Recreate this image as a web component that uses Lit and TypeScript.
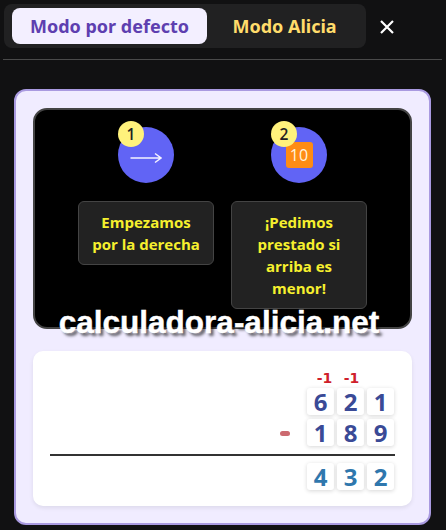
import { LitElement, html, css } from "lit";
import { customElement } from "lit/decorators.js";

@customElement("app-root")
export class AppRoot extends LitElement {
  static styles = css`
    :host { display: block; position: relative; width: 446px; height: 530px; overflow: hidden; background: #111112; font-family: "Open Sans", sans-serif; }
    .top { display: flex; align-items: center; padding: 4px 3px 0 4px; height: 44px; }
    .tabs { display: flex; align-items: center; width: 362px; height: 44px; box-sizing: border-box; padding: 4px 8px; background: #212122; border-radius: 8px; }
    .tab { height: 36px; display: flex; align-items: center; justify-content: center; font: 700 18px "Noto Sans", sans-serif; border-radius: 8px; }
    .tab.on { width: 195px; background: #f3efff; color: #5e3fb0; }
    .tab.off { flex: 1; color: #ffdc6b; padding-left: 4px; }
    .close { margin: 1px 0 0 13px; width: 16px; height: 16px; }
    .rule { height: 1px; background: #4a4a4a; margin: 11px 4px 0 3px; }
    .panel { box-sizing: border-box; width: 417px; height: 436px; margin: 29px 0 0 14px; padding: 17px 17px; background: #f0ecff; border: 2px solid #a99ae0; border-radius: 12px; display: flex; flex-direction: column; gap: 22px; }
    .steps { box-sizing: border-box; height: 221px; background: #000; border: 2px solid #444; border-radius: 14px; display: flex; justify-content: center; gap: 17px; padding-top: 15px; }
    .step { width: 136px; display: flex; flex-direction: column; align-items: center; }
    .circle { position: relative; width: 56px; height: 56px; margin-top: 2px; border-radius: 50%; background: #6164f5; display: flex; align-items: center; justify-content: center; }
    .badge { position: absolute; left: 0; top: -6px; width: 26px; height: 26px; border-radius: 50%; background: #fff27c; color: #222; display: flex; align-items: center; justify-content: center; font: 600 15.5px "Open Sans", sans-serif; }
    .arrow { margin-top: 5px; }
    .ten { width: 27px; height: 26px; border-radius: 3px; background: #ff8c14; color: #fff3dd; display: flex; align-items: center; justify-content: center; font: 400 16px "Open Sans", sans-serif; }
    .label { box-sizing: border-box; width: 136px; margin-top: 18px; padding: 9px 8px; background: #222222; border: 1px solid #444; border-radius: 6px; color: #f6f02e; text-align: center; font: 700 15px/22px "Open Sans", sans-serif; }
    .calc { flex: 1; background: #fff; border-radius: 10px; box-shadow: 0 2px 4px rgba(0,0,0,0.08); padding: 18px 17px 0; display: flex; flex-direction: column; align-items: stretch; }
    .carry { display: grid; grid-template-columns: 27px 27px 30px; justify-content: end; height: 19px; color: #cf1f2c; font: 700 14px/18px "DejaVu Sans", sans-serif; text-align: center; }
    .row { display: flex; justify-content: flex-end; gap: 3px; padding-right: 1px; }
    .row + .row { margin-top: 4px; }
    .minus { width: 10px; height: 5px; border-radius: 2.5px; background: #cc6a70; align-self: center; margin-right: 14px; margin-top: 2px; }
    .cell { width: 27px; height: 27px; border-radius: 3px; background: #fff; box-shadow: 0 1px 4px rgba(0,0,0,0.16); display: flex; align-items: center; justify-content: center; color: #3a4a96; font: 700 24px/1 "Noto Sans", sans-serif; }
    .line { height: 2px; background: #333; margin: 8px 0 7px; }
    .res .cell { color: #2f77ad; }
    .mark { position: absolute; left: 0; width: 100%; top: 304px; padding-right: 8px; box-sizing: border-box; text-align: center; color: #fff; font: 700 31.5px/36px "Liberation Sans", sans-serif; -webkit-text-stroke: 0.4px #fff; text-shadow: 3px 3px 3px rgba(0,0,0,0.6); pointer-events: none; }
  `;

  render() {
    return html`
      <div class="top">
        <div class="tabs">
          <div class="tab on">Modo por defecto</div>
          <div class="tab off">Modo Alicia</div>
        </div>
        <svg class="close" viewBox="0 0 16 16"><path d="M2 2 L14 14 M14 2 L2 14" stroke="#fff" stroke-width="2.2" fill="none"/></svg>
      </div>
      <div class="rule"></div>
      <div class="panel">
        <div class="steps">
          <div class="step">
            <div class="circle">
              <span class="badge">1</span>
              <svg class="arrow" width="32" height="14" viewBox="0 0 32 14"><path d="M0.5 7 H31 M25 2.5 L31 7 L25 11.5" stroke="#f4f2ff" stroke-width="1.5" fill="none"/></svg>
            </div>
            <div class="label">Empezamos por la derecha</div>
          </div>
          <div class="step">
            <div class="circle">
              <span class="badge">2</span>
              <div class="ten">10</div>
            </div>
            <div class="label">¡Pedimos prestado si arriba es menor!</div>
          </div>
        </div>
        <div class="calc">
          <div class="carry"><span>-1</span><span>-1</span><span></span></div>
          <div class="row"><span class="cell">6</span><span class="cell">2</span><span class="cell">1</span></div>
          <div class="row"><span class="minus"></span><span class="cell">1</span><span class="cell">8</span><span class="cell">9</span></div>
          <div class="line"></div>
          <div class="row res"><span class="cell">4</span><span class="cell">3</span><span class="cell">2</span></div>
        </div>
      </div>
      <div class="mark">calculadora-alicia.net</div>
    `;
  }
}
